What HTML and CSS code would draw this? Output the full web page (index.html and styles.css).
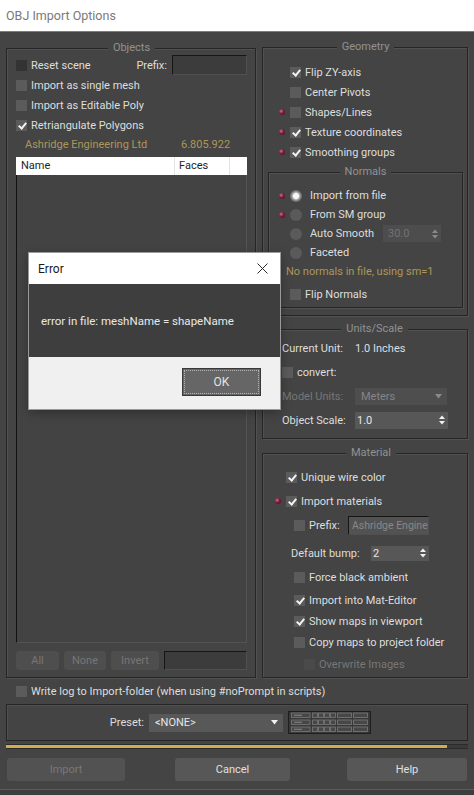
FILE: index.html
```html
<!DOCTYPE html>
<html lang="en">
<head>
<meta charset="utf-8">
<title>OBJ Import Options</title>
<link rel="stylesheet" href="styles.css">
</head>
<body>
<div class="app">
  <div class="titlebar">OBJ Import Options</div>
  <div class="window">
    <div class="columns">
      <fieldset class="group objects">
        <legend>Objects</legend>
        <div class="row">
          <span class="cb dim"></span><span class="lbl">Reset scene</span>
          <span class="prefix-lbl">Prefix:</span><span class="field prefix-field"></span>
        </div>
        <div class="row"><span class="cb"></span><span class="lbl">Import as single mesh</span></div>
        <div class="row"><span class="cb"></span><span class="lbl">Import as Editable Poly</span></div>
        <div class="row"><span class="cb on"></span><span class="lbl">Retriangulate Polygons</span></div>
        <div class="info-row"><span class="gold company">Ashridge Engineering Ltd</span><span class="gold">6.805.922</span></div>
        <div class="list">
          <div class="list-head"><span>Name</span><span>Faces</span><span></span></div>
          <div class="list-body"></div>
        </div>
        <div class="list-tools">
          <span class="sbtn">All</span><span class="sbtn">None</span><span class="sbtn">Invert</span><span class="field"></span>
        </div>
      </fieldset>

      <div class="right">
        <fieldset class="group geometry">
          <legend>Geometry</legend>
          <div class="row"><span class="cb on"></span><span class="lbl">Flip ZY-axis</span></div>
          <div class="row"><span class="cb"></span><span class="lbl">Center Pivots</span></div>
          <div class="row"><span class="pin"></span><span class="cb"></span><span class="lbl">Shapes/Lines</span></div>
          <div class="row"><span class="pin"></span><span class="cb on"></span><span class="lbl">Texture coordinates</span></div>
          <div class="row"><span class="pin"></span><span class="cb on"></span><span class="lbl">Smoothing groups</span></div>
          <fieldset class="group normals">
            <legend>Normals</legend>
            <div class="row"><span class="pin"></span><span class="rb on"></span><span class="rlbl">Import from file</span></div>
            <div class="row"><span class="pin"></span><span class="rb"></span><span class="rlbl">From SM group</span></div>
            <div class="row"><span class="rb"></span><span class="rlbl auto-lbl">Auto Smooth</span>
              <span class="spin dis auto-spin"><span>30.0</span>
                <svg width="6" height="10" viewBox="0 0 6 10"><polygon points="0,4 3,0.5 6,4" fill="#8a8a8a"/><polygon points="0,6 3,9.5 6,6" fill="#8a8a8a"/></svg>
              </span>
            </div>
            <div class="row"><span class="rb"></span><span class="rlbl">Faceted</span></div>
            <div class="note gold">No normals in file, using sm=1</div>
            <div class="row flip"><span class="cb"></span><span class="lbl">Flip Normals</span></div>
          </fieldset>
        </fieldset>

        <fieldset class="group units">
          <legend>Units/Scale</legend>
          <div class="row"><span class="ulbl">Current Unit:</span><span>1.0 Inches</span></div>
          <div class="row"><span class="cb"></span><span class="lbl">convert:</span></div>
          <div class="row"><span class="ulbl dis">Model Units:</span>
            <span class="dd dis"><span>Meters</span>
              <svg width="7" height="5" viewBox="0 0 7 5"><polygon points="0,0 7,0 3.5,4.5" fill="#8a8a8a"/></svg>
            </span>
          </div>
          <div class="row"><span class="ulbl">Object Scale:</span>
            <span class="spin scale-spin"><span>1.0</span>
              <svg width="6" height="10" viewBox="0 0 6 10"><polygon points="0,4 3,0.5 6,4" fill="#f0f0f0"/><polygon points="0,6 3,9.5 6,6" fill="#f0f0f0"/></svg>
            </span>
          </div>
        </fieldset>

        <fieldset class="group material">
          <legend>Material</legend>
          <div class="row h23"><span class="cb on"></span><span class="lbl">Unique wire color</span></div>
          <div class="row h24"><span class="pin"></span><span class="cb on"></span><span class="lbl">Import materials</span></div>
          <div class="row h24 sub"><span class="cb"></span><span class="lbl mat-prefix-lbl">Prefix:</span><span class="field mat-prefix-field">Ashridge Engine</span></div>
          <div class="row h24 bump"><span class="bump-lbl">Default bump:</span>
            <span class="spin bump-spin"><span>2</span>
              <svg width="6" height="10" viewBox="0 0 6 10"><polygon points="0,4 3,0.5 6,4" fill="#f0f0f0"/><polygon points="0,6 3,9.5 6,6" fill="#f0f0f0"/></svg>
            </span>
          </div>
          <div class="row h25 sub"><span class="cb"></span><span class="lbl">Force black ambient</span></div>
          <div class="row h21 sub"><span class="cb on"></span><span class="lbl">Import into Mat-Editor</span></div>
          <div class="row h21 sub"><span class="cb on"></span><span class="lbl">Show maps in viewport</span></div>
          <div class="row h21 sub"><span class="cb"></span><span class="lbl">Copy maps to project folder</span></div>
          <div class="row h22 sub2"><span class="cb off"></span><span class="lbl dis">Overwrite Images</span></div>
        </fieldset>
      </div>
    </div>

    <div class="logrow"><span class="cb"></span><span class="lbl">Write log to Import-folder (when using #noPrompt in scripts)</span></div>

    <div class="preset">
      <span class="preset-lbl">Preset:</span>
      <span class="dd preset-dd"><span>&lt;NONE&gt;</span>
        <svg width="7" height="5" viewBox="0 0 7 5"><polygon points="0,0 7,0 3.5,4.5" fill="#f2f2f2"/></svg>
      </span>
      <svg class="preset-grid" width="83" height="23" viewBox="0 0 83 23">
        <rect x="0.5" y="0.5" width="82" height="22" fill="#393939" stroke="#1e1e1e"/>
        <g fill="#474747" stroke="#7a7a7a" stroke-width="0.8">
          <rect x="3.5" y="2" width="18.5" height="4.5"/>
          <rect x="24.5" y="2" width="5" height="4.5"/><rect x="30.5" y="2" width="5" height="4.5"/><rect x="36.5" y="2" width="5" height="4.5"/><rect x="42.5" y="2" width="5" height="4.5"/>
          <rect x="49.5" y="2" width="14" height="4.5"/><rect x="65.5" y="2" width="14" height="4.5"/>
          <rect x="3.5" y="9" width="18.5" height="4.5"/>
          <rect x="24.5" y="9" width="5" height="4.5"/><rect x="30.5" y="9" width="5" height="4.5"/><rect x="36.5" y="9" width="5" height="4.5"/><rect x="42.5" y="9" width="5" height="4.5"/>
          <rect x="49.5" y="9" width="14" height="4.5"/><rect x="65.5" y="9" width="14" height="4.5"/>
          <rect x="3.5" y="16" width="18.5" height="4.5"/>
          <rect x="24.5" y="16" width="5" height="4.5"/><rect x="30.5" y="16" width="5" height="4.5"/><rect x="36.5" y="16" width="5" height="4.5"/><rect x="42.5" y="16" width="5" height="4.5"/>
          <rect x="49.5" y="16" width="14" height="4.5"/><rect x="65.5" y="16" width="14" height="4.5"/>
        </g>
        <g stroke="#9a9a9a" stroke-width="0.8">
          <line x1="6" y1="4.25" x2="14" y2="4.25"/><line x1="6" y1="11.25" x2="14" y2="11.25"/><line x1="6" y1="18.25" x2="14" y2="18.25"/>
        </g>
      </svg>
    </div>

    <div class="progress"><div class="progress-fill" style="width:95.4%"></div></div>

    <div class="actions">
      <span class="btn import">Import</span>
      <span class="btn cancel">Cancel</span>
      <span class="btn help">Help</span>
    </div>
    <div class="bottom-edge"></div>
  </div>

  <div class="dialog">
    <div class="dlg-title"><span>Error</span>
      <svg class="dlg-close" width="11" height="11" viewBox="0 0 11 11"><path d="M0.5 0.5 L10.5 10.5 M10.5 0.5 L0.5 10.5" stroke="#2a2a2a" stroke-width="1" fill="none"/></svg>
    </div>
    <div class="dlg-body">error in file: meshName = shapeName</div>
    <div class="dlg-foot"><span class="dlg-ok">OK</span></div>
  </div>
</div>
</body>
</html>
```

FILE: styles.css
```css
* { box-sizing: border-box; }
html, body { margin: 0; padding: 0; }
body {
  width: 474px; height: 795px; overflow: hidden;
  background: #444;
  font-family: Roboto, "Liberation Sans", Arial, sans-serif;
  font-size: 11px; color: #dedede;
}
.app { position: relative; height: 795px; display: flex; flex-direction: column; }

.titlebar {
  height: 32px; flex: none; background: #fff;
  border-bottom: 1px solid #7d7d7d;
  color: #7a7a7a; font-size: 12.5px; line-height: 31px; padding-left: 6px;
}
.window { flex: 1; display: flex; flex-direction: column; padding: 9px 6px 0; background: #444; }
.columns { display: grid; grid-template-columns: 250px 206px; column-gap: 6px; align-items: start; }
.right { display: flex; flex-direction: column; margin-top: -1px; }

.group {
  margin: 0; padding: 0; min-width: 0;
  border: 1px solid #262626;
  box-shadow: inset 1px 1px 0 #515151, 1px 1px 0 #515151;
}
.group > legend {
  margin: 0 auto; padding: 0 5px;
  font-size: 11px; line-height: 14px; color: #929292; background: #444;
}

.row { display: flex; align-items: center; height: 20px; white-space: nowrap; }
.lbl { margin-left: 4px; }
.dis { color: #777; }
.gold { color: #ad9757; }

.cb { flex: none; position: relative; width: 11px; height: 11px; background: #5b5b5b; }
.cb.dim { background: #333; }
.cb.off { background: #4a4a4a; }
.cb.on::after {
  content: ""; position: absolute; left: 3.5px; top: 1px; width: 3px; height: 6px;
  border: solid #f2f2f2; border-width: 0 2px 2px 0; transform: rotate(40deg);
}
.rb { flex: none; width: 12px; height: 12px; border-radius: 50%; background: #5a5a5a; }
.rb.on { background: radial-gradient(circle, #f5f5f5 0 2.6px, #b0b0b0 3.6px, #7c7c7c 5px, #686868 6px); }
.rlbl { margin-left: 8px; }
.pin {
  flex: none; width: 6px; height: 6px; margin-left: -11px; margin-right: 5px; border-radius: 50%;
  background: radial-gradient(circle at 35% 35%, #c87090 0, #7e1a3c 45%, #480820 100%);
}

.field {
  display: block; background: #3c3c3c;
  border-top: 1px solid #161616; border-left: 1px solid #161616;
  border-right: 1px solid #505050; border-bottom: 1px solid #505050;
}

/* Objects */
.objects { padding: 0 8px 7px 9px; }
.prefix-lbl { margin-left: auto; margin-right: 5px; }
.prefix-field { width: 75px; height: 20px; }
.info-row { display: flex; align-items: center; height: 19px; padding-left: 9px; white-space: nowrap; }
.company { width: 156px; }
.list { margin-top: 3px; }
.list-head { display: grid; grid-template-columns: 159px 55px 1fr; height: 18px; background: #fff; color: #1e1e1e; }
.list-head span { border-right: 1px solid #e3e3e3; line-height: 18px; padding-left: 5px; }
.list-head span:nth-child(2) { padding-left: 4px; }
.list-head span:last-child { border-right: 0; }
.list-body {
  height: 468px; background: #434343;
  border-left: 1px solid #121212; border-right: 1px solid #535353; border-bottom: 1px solid #535353;
}
.list-tools { display: grid; grid-template-columns: 43px 42px 48px 1fr; column-gap: 5px; height: 19px; margin-top: 8px; }
.sbtn { background: #4e4e4e; border-radius: 3px; color: #767676; text-align: center; line-height: 19px; }

/* Geometry */
.geometry { padding: 8px 4px 7px 5px; }
.geometry > .row { padding-left: 22px; }
.normals { margin-top: 3px; padding: 7px 0 3px; }
.normals > .row { padding-left: 21px; height: 19px; }
.normals > .row.flip { height: 20px; margin-top: 4px; }
.note { height: 18px; padding-left: 17px; display: flex; align-items: center; white-space: nowrap; }
.auto-lbl { width: 73px; flex: none; }

.spin {
  display: flex; align-items: center; justify-content: space-between;
  background: #575757; padding: 0 3px 0 3px; color: #e6e6e6;
}
.spin.dis { background: #4d4d4d; color: #737373; }
.spin svg, .dd svg { display: block; flex: none; }
.auto-spin { width: 58px; height: 17px; padding-left: 5px; }

/* Units */
.units { margin-top: 6px; padding: 0 0 6px 19px; }
.units > .row { height: 24px; }
.ulbl { width: 73px; flex: none; }
.dd {
  display: flex; align-items: center; justify-content: space-between;
  background: #585858; color: #e6e6e6; padding: 0 5px 0 6px;
}
.dd.dis { background: #4e4e4e; color: #858585; }
.units .dd { width: 92px; height: 17px; }
.scale-spin { width: 93px; height: 17px; padding-left: 2px; }

/* Material */
.material { margin-top: 7px; padding: 6px 0 2px 12px; }
.material > .row { padding-left: 11px; }
.material > .row.sub { padding-left: 19px; }
.material > .row.sub2 { padding-left: 29px; }
.material > .row.bump { padding-left: 16px; margin-top: 4px; }
.h21 { height: 21px; }
.h22 { height: 22px; }
.h23 { height: 23px; }
.h24 { height: 24px; }
.h25 { height: 25px; }
.mat-prefix-lbl { width: 39px; flex: none; }
.mat-prefix-field {
  width: 81px; height: 19px; background: #525252; color: #888; font-size: 10.5px;
  padding-left: 3px; line-height: 17px; overflow: hidden; white-space: nowrap;
}
.bump-lbl { width: 80px; flex: none; }
.bump-spin { width: 58px; height: 15px; padding-left: 2px; }

/* Bottom */
.logrow { display: flex; align-items: center; height: 20px; margin-top: 3px; padding-left: 10px; white-space: nowrap; }
.preset {
  display: flex; align-items: center; height: 37px; margin-top: 3px;
  border: 1px solid #262626; box-shadow: inset 1px 1px 0 #4f4f4f;
}
.preset-lbl { width: 137px; text-align: right; margin-right: 5px; flex: none; }
.preset-dd { width: 134px; height: 18px; margin-right: 5px; }
.preset-grid { display: block; flex: none; }

.progress { height: 5px; margin-top: 3px; border-top: 1px solid #2b2b2b; border-bottom: 1px solid #2b2b2b; background: #3a3a3a; }
.progress-fill { height: 100%; background: #cfae52; }

.actions { display: flex; justify-content: space-between; margin-top: 9px; padding: 0 1px; }
.btn {
  height: 23px; background: #575757; border-radius: 3px; color: #e0e0e0;
  display: flex; align-items: center; justify-content: center;
}
.btn.import { width: 118px; color: #777; background: #525252; }
.btn.cancel { width: 115px; margin-right: 7px; }
.btn.help { width: 120px; }
.bottom-edge { margin: 8px -6px 0; flex: 1; border-top: 1px solid #5c5c5c; background: #3d3d3d; }

/* Error dialog */
.dialog {
  position: absolute; left: 29px; top: 253px; width: 251px; height: 156px;
  display: flex; flex-direction: column;
  box-shadow: 0 0 0 1px #9a9a9a, 0 3px 10px rgba(0, 0, 0, 0.35);
}
.dlg-title {
  height: 31px; flex: none; background: #fff; color: #1b1b1b; font-size: 12px;
  display: flex; align-items: center; justify-content: space-between; padding: 0 12px 0 9px;
}
.dlg-close { display: block; }
.dlg-body {
  height: 73px; flex: none; background: #3e3e3e; color: #e8e8e8; font-size: 11.5px;
  display: flex; align-items: center; padding-left: 12px;
}
.dlg-foot {
  flex: 1; background: #f0f0f0;
  display: flex; justify-content: flex-end; align-items: flex-start; padding: 11px 19px 0 0;
}
.dlg-ok {
  width: 79px; height: 28px; background: #666; border: 1px solid #3a3a3a;
  outline: 1px dotted #b4b4b4; outline-offset: -3px;
  color: #e2e2e2; font-size: 12px;
  display: flex; align-items: center; justify-content: center;
}
```
